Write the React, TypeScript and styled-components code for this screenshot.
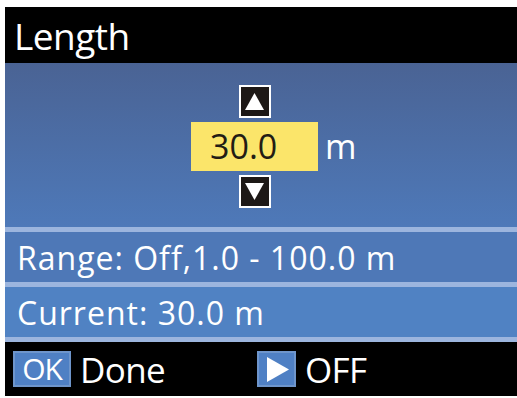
import styled, { createGlobalStyle } from 'styled-components';

const GlobalStyle = createGlobalStyle`
  html, body {
    margin: 0;
    padding: 0;
    background: #fff;
  }
  body {
    font-family: "Open Sans", "Liberation Sans", sans-serif;
  }
`;

const Screen = styled.div`
  margin: 7px 0 0 5px;
  width: 512px;
  display: flex;
  flex-direction: column;
  color: #fff;
`;

const Header = styled.div`
  height: 56px;
  background: #000;
  display: flex;
  align-items: center;
  padding-left: 9px;
  font-size: 37px;
  line-height: 1;
  letter-spacing: -0.5px;
`;

const Main = styled.div`
  height: 164px;
  box-sizing: border-box;
  padding: 22px 0 0 186px;
  background: linear-gradient(to bottom, #4a6394, #4e79b9);
`;

const Stepper = styled.div`
  display: grid;
  grid-template-columns: 127px auto;
  row-gap: 4px;
  align-items: center;
`;

const ArrowBox = styled.div`
  grid-column: 1;
  justify-self: center;
  width: 32px;
  height: 33px;
  box-sizing: border-box;
  border: 2px solid #fff;
  background: #1d1816;
  display: flex;
  align-items: center;
  justify-content: center;
`;

const ValueBox = styled.div`
  grid-column: 1;
  height: 49px;
  background: #fbe56a;
  color: #231c14;
  font-size: 34px;
  line-height: 49px;
  padding-left: 19px;
  box-sizing: border-box;
`;

const Unit = styled.div`
  grid-column: 2;
  padding-left: 7px;
  font-size: 34px;
  line-height: 49px;
`;

const Separator = styled.div`
  height: 5px;
  background: #9cb5de;
`;

const InfoRow = styled.div<{ $bg: string }>`
  height: 50px;
  background: ${(p) => p.$bg};
  display: flex;
  align-items: center;
  padding-left: 12px;
  font-size: 32px;
  letter-spacing: 1px;
`;

const Footer = styled.div`
  height: 54px;
  background: #000;
  display: flex;
  align-items: center;
  padding-left: 8px;
`;

const KeyGroup = styled.div<{ $width: number }>`
  width: ${(p) => p.$width}px;
  display: flex;
  align-items: center;
  gap: 9px;
`;

const KeyBox = styled.div<{ $w: number }>`
  width: ${(p) => p.$w}px;
  height: 36px;
  box-sizing: border-box;
  border: 2px solid #6e95cb;
  background: #4f80c4;
  display: flex;
  align-items: center;
  justify-content: center;
  font-size: 30px;
  line-height: 1;
  letter-spacing: -1px;
`;

const KeyLabel = styled.span`
  font-size: 35px;
  line-height: 1;
  letter-spacing: -0.6px;
`;

const Triangle = ({ down }: { down?: boolean }) => (
  <svg width="19" height="17" viewBox="0 0 19 17">
    <polygon points={down ? '0,0 19,0 9.5,17' : '9.5,0 19,17 0,17'} fill="#fff" />
  </svg>
);

const PlayIcon = () => (
  <svg width="22" height="25" viewBox="0 0 22 25" style={{ marginLeft: 2 }}>
    <polygon points="0,0 22,12.5 0,25" fill="#fff" />
  </svg>
);

export default function App() {
  return (
    <>
      <GlobalStyle />
      <Screen>
        <Header>Length</Header>
        <Main>
          <Stepper>
            <ArrowBox>
              <Triangle />
            </ArrowBox>
            <ValueBox>30.0</ValueBox>
            <Unit>m</Unit>
            <ArrowBox>
              <Triangle down />
            </ArrowBox>
          </Stepper>
        </Main>
        <Separator />
        <InfoRow $bg="#4e78b7">Range: Off,1.0 - 100.0 m</InfoRow>
        <Separator />
        <InfoRow $bg="#5082c3">Current: 30.0 m</InfoRow>
        <Separator />
        <Footer>
          <KeyGroup $width={244}>
            <KeyBox $w={58}>OK</KeyBox>
            <KeyLabel>Done</KeyLabel>
          </KeyGroup>
          <KeyGroup $width={150}>
            <KeyBox $w={39}>
              <PlayIcon />
            </KeyBox>
            <KeyLabel>OFF</KeyLabel>
          </KeyGroup>
        </Footer>
      </Screen>
    </>
  );
}
